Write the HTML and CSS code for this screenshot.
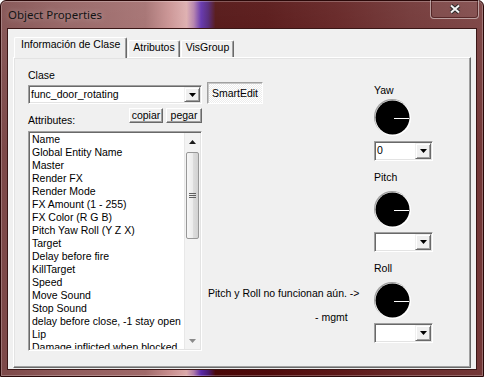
FILE: index.html
```html
<!DOCTYPE html>
<html lang="en">
<head>
    <meta charset="UTF-8">
    <title>Object Properties</title>
    <link rel="stylesheet" href="styles.css">
</head>
<body>
    <div class="window">
        <div class="titlebar">
            <span class="title">Object Properties</span>
            <div class="close">
                <svg width="12" height="10" viewBox="0 0 12 10">
                    <path d="M2 1.5L10 8.5M10 1.5L2 8.5" stroke="#2a2a2a" stroke-width="4"/>
                    <path d="M2 1.5L10 8.5M10 1.5L2 8.5" stroke="#f4f4f4" stroke-width="2"/>
                </svg>
            </div>
        </div>

        <div class="client">
            <div class="tabs">
                <div class="tab active">Información de Clase</div>
                <div class="tab">Atributos</div>
                <div class="tab">VisGroup</div>
            </div>

            <div class="panel">
                <div class="label class-label">Clase</div>

                <div class="class-row">
                    <div class="combo combo-class">
                        <span class="combo-text">func_door_rotating</span>
                        <span class="combo-btn"><svg width="7" height="4" viewBox="0 0 7 4"><path d="M0 0H7L3.5 4Z"/></svg></span>
                    </div>
                    <div class="toggle">SmartEdit</div>
                </div>

                <div class="attr-row">
                    <div class="label attr-label">Attributes:</div>
                    <div class="btn-group">
                        <div class="btn btn-copy">copiar</div>
                        <div class="btn btn-paste">pegar</div>
                    </div>
                </div>

                <div class="listbox">
                    <ul class="list-items">
                        <li>Name</li>
                        <li>Global Entity Name</li>
                        <li>Master</li>
                        <li>Render FX</li>
                        <li>Render Mode</li>
                        <li>FX Amount (1 - 255)</li>
                        <li>FX Color (R G B)</li>
                        <li>Pitch Yaw Roll (Y Z X)</li>
                        <li>Target</li>
                        <li>Delay before fire</li>
                        <li>KillTarget</li>
                        <li>Speed</li>
                        <li>Move Sound</li>
                        <li>Stop Sound</li>
                        <li>delay before close, -1 stay open</li>
                        <li>Lip</li>
                        <li>Damage inflicted when blocked</li>
                    </ul>
                    <div class="scrollbar">
                        <div class="sb-arrow"><svg width="7" height="4" viewBox="0 0 7 4"><path d="M0 4H7L3.5 0Z" fill="#1a1a1a"/></svg></div>
                        <div class="sb-thumb">
                            <svg width="7" height="6" viewBox="0 0 7 6"><path d="M0 .5H7M0 2.5H7M0 4.5H7" stroke="#606060"/></svg>
                        </div>
                        <div class="sb-space"></div>
                        <div class="sb-arrow"><svg width="7" height="4" viewBox="0 0 7 4"><path d="M0 0H7L3.5 4Z" fill="#8a8a8a"/></svg></div>
                    </div>
                </div>

                <div class="note">
                    <p>Pitch y Roll no funcionan aún. -&gt;</p>
                    <p class="sig">- mgmt</p>
                </div>

                <div class="angles">
                    <div class="angle-label first">Yaw</div>
                    <svg class="dial first" width="37" height="37" viewBox="0 0 37 37">
                        <circle cx="18" cy="18" r="18" fill="#a0a0a0"/>
                        <circle cx="19" cy="19" r="18" fill="#ffffff"/>
                        <circle cx="18.5" cy="18.5" r="17" fill="#000000"/>
                        <path d="M20 19.5H35" stroke="#ffffff"/>
                    </svg>
                    <div class="combo combo-angle first">
                        <span class="combo-text">0</span>
                        <span class="combo-btn"><svg width="7" height="4" viewBox="0 0 7 4"><path d="M0 0H7L3.5 4Z"/></svg></span>
                    </div>

                    <div class="angle-label">Pitch</div>
                    <svg class="dial" width="37" height="37" viewBox="0 0 37 37">
                        <circle cx="18" cy="18" r="18" fill="#a0a0a0"/>
                        <circle cx="19" cy="19" r="18" fill="#ffffff"/>
                        <circle cx="18.5" cy="18.5" r="17" fill="#000000"/>
                        <path d="M20 19.5H35" stroke="#ffffff"/>
                    </svg>
                    <div class="combo combo-angle">
                        <span class="combo-text"></span>
                        <span class="combo-btn"><svg width="7" height="4" viewBox="0 0 7 4"><path d="M0 0H7L3.5 4Z"/></svg></span>
                    </div>

                    <div class="angle-label">Roll</div>
                    <svg class="dial" width="37" height="37" viewBox="0 0 37 37">
                        <circle cx="18" cy="18" r="18" fill="#a0a0a0"/>
                        <circle cx="19" cy="19" r="18" fill="#ffffff"/>
                        <circle cx="18.5" cy="18.5" r="17" fill="#000000"/>
                        <path d="M20 19.5H35" stroke="#ffffff"/>
                    </svg>
                    <div class="combo combo-angle">
                        <span class="combo-text"></span>
                        <span class="combo-btn"><svg width="7" height="4" viewBox="0 0 7 4"><path d="M0 0H7L3.5 4Z"/></svg></span>
                    </div>
                </div>
            </div>
        </div>
    </div>
</body>
</html>
```

FILE: styles.css
```css
body, html {
    margin: 0;
    padding: 0;
    font-family: "Liberation Sans", Arial, sans-serif;
    font-size: 10.5px;
    color: #000000;
}

.window {
    width: 484px;
    height: 377px;
    box-sizing: border-box;
    border: 1px solid #2a0808;
    border-radius: 6px 6px 0 0;
    padding: 0 6px 6px;
    display: flex;
    flex-direction: column;
    background:
        linear-gradient(180deg, rgba(255, 255, 255, 0.10), rgba(255, 255, 255, 0) 40%),
        linear-gradient(90deg, #7c4848 0%, #8e5a5a 12%, #a06a6a 30%, #c88e8e 35%, #dcaaaa 38.5%, #b07aa8 40%, #5a28a8 41.5%, #4a1a70 43%, #4a0808 44.5%, #4e0a0a 55%, #5c1818 70%, #6a2c2c 85%, #743838 100%);
    box-shadow: inset 0 0 0 1px rgba(255, 255, 255, 0.25);
}

.titlebar {
    height: 27px;
    display: flex;
    justify-content: space-between;
    align-items: flex-start;
}

.title {
    align-self: center;
    padding-left: 1px;
    font-family: "Noto Sans", sans-serif;
    font-size: 11.5px;
    color: #141414;
    text-shadow: 0 0 6px rgba(255, 255, 255, 0.45);
}

.close {
    margin-top: -1px;
    margin-right: -2px;
    width: 49px;
    height: 19px;
    box-sizing: border-box;
    border: 1px solid rgba(255, 255, 255, 0.45);
    border-top: none;
    border-radius: 0 0 4px 4px;
    box-shadow: inset 0 0 0 1px rgba(40, 0, 0, 0.5);
    background: rgba(255, 255, 255, 0.06);
    display: flex;
    align-items: center;
    justify-content: center;
}

.client {
    flex: 1;
    background-color: #f0f0f0;
    border: 1px solid #3a1616;
    padding: 8px 5px 1px;
    display: flex;
    flex-direction: column;
}

/* tabs */
.tabs {
    display: flex;
    align-items: flex-end;
    padding-left: 1px;
    z-index: 1;
}

.tab {
    height: 17px;
    box-sizing: border-box;
    padding: 0 4px;
    line-height: 13px;
    border: 1px solid;
    border-color: #ffffff #696969 transparent #ffffff;
    border-bottom: none;
    border-radius: 2px 2px 0 0;
    box-shadow: inset -1px 0 #a0a0a0;
    background-color: #f0f0f0;
}

.tab + .tab {
    margin-left: 1px;
}

.tab.active {
    height: 21px;
    margin-bottom: -1px;
    padding: 0 6px;
}

.panel {
    flex: 1;
    border: 1px solid;
    border-color: #ffffff #696969 #696969 #ffffff;
    box-shadow: inset -1px -1px #a0a0a0, inset 1px 1px #e3e3e3;
    padding: 11px 37px 0 14px;
    display: grid;
    grid-template-columns: 174px 172px 59px;
    grid-template-rows: auto auto auto auto;
    align-content: start;
}

.label {
    line-height: 13px;
}

.class-label {
    grid-column: 1 / 3;
}

.class-row {
    grid-column: 1 / 3;
    display: flex;
    align-items: flex-end;
}

/* combo boxes */
.combo {
    display: flex;
    box-sizing: border-box;
    border: 1px solid;
    border-color: #a0a0a0 #ffffff #ffffff #a0a0a0;
    box-shadow: inset 1px 1px #696969, inset -1px -1px #e3e3e3;
    background-color: #ffffff;
    padding: 1px;
}

.combo-class {
    width: 174px;
    height: 19px;
}

.combo-text {
    flex: 1;
    padding-left: 1px;
    line-height: 15px;
    white-space: nowrap;
}

.combo-btn {
    width: 16px;
    box-sizing: border-box;
    display: flex;
    align-items: center;
    justify-content: center;
    background-color: #f0f0f0;
    border: 1px solid;
    border-color: #f0f0f0 #696969 #696969 #f0f0f0;
    box-shadow: inset 1px 1px #ffffff, inset -1px -1px #a0a0a0;
}

.toggle {
    margin-left: 5px;
    width: 56px;
    height: 22px;
    box-sizing: border-box;
    line-height: 20px;
    text-align: center;
    border: 1px solid;
    border-color: #a0a0a0 #ffffff #ffffff #a0a0a0;
    box-shadow: inset 1px 1px #c8c8c8;
    background: repeating-conic-gradient(#ffffff 0 25%, #ececec 0 50%) 0 0 / 2px 2px;
}

.attr-row {
    grid-column: 1;
    display: flex;
    align-items: flex-start;
}

.attr-label {
    margin-top: 10px;
}

.btn-group {
    margin-left: auto;
    margin-top: 4px;
    display: flex;
    gap: 3px;
}

.btn {
    height: 15px;
    box-sizing: border-box;
    line-height: 13px;
    text-align: center;
    border: 1px solid;
    border-color: #ffffff #696969 #696969 #ffffff;
    box-shadow: inset -1px -1px #a0a0a0;
    background-color: #f0f0f0;
}

.btn-copy {
    width: 34px;
}

.btn-paste {
    width: 36px;
}

/* attribute list */
.listbox {
    grid-column: 1;
    grid-row: 4;
    margin-top: 4px;
    height: 220px;
    box-sizing: border-box;
    display: flex;
    border: 1px solid;
    border-color: #a0a0a0 #ffffff #ffffff #a0a0a0;
    box-shadow: inset 1px 1px #696969, inset -1px -1px #e3e3e3;
    background-color: #ffffff;
    padding: 1px;
}

.list-items {
    flex: 1;
    margin: 0;
    padding: 0 0 0 2px;
    list-style-type: none;
    overflow: hidden;
}

.list-items li {
    line-height: 13px;
    white-space: nowrap;
}

.scrollbar {
    width: 16px;
    display: flex;
    flex-direction: column;
    background-color: #f3f3f3;
    border-left: 1px solid #e8e8e8;
    box-sizing: border-box;
}

.sb-arrow {
    height: 17px;
    display: flex;
    align-items: center;
    justify-content: center;
}

.sb-thumb {
    margin: 2px 0 0 1px;
    width: 13px;
    height: 87px;
    box-sizing: border-box;
    border: 1px solid #979797;
    border-radius: 2px;
    background: linear-gradient(90deg, #f7f7f7, #ececec 50%, #dedede 51%, #d2d2d2);
    display: flex;
    align-items: center;
    justify-content: center;
}

.sb-space {
    flex: 1;
}

/* middle note */
.note {
    grid-column: 2;
    grid-row: 4;
    padding-left: 6px;
}

.note p {
    margin: 160px 0 0;
    line-height: 13px;
    white-space: nowrap;
}

.note .sig {
    margin: 11px 0 0 107px;
}

/* yaw / pitch / roll */
.angles {
    grid-column: 3;
    grid-row: 1 / 5;
    display: flex;
    flex-direction: column;
    align-items: flex-start;
}

.angle-label {
    margin-top: 10px;
    line-height: 13px;
}

.angle-label.first {
    margin-top: 15px;
}

.dial {
    display: block;
    margin-top: 7px;
}

.dial.first {
    margin-top: 2px;
}

.combo-angle {
    width: 59px;
    height: 20px;
    margin-top: 4px;
}

.combo-angle.first {
    margin-top: 5px;
}
```
